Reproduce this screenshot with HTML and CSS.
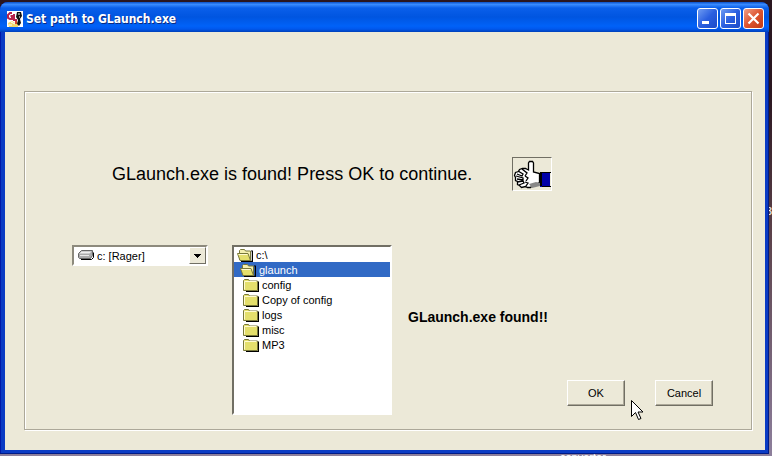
FILE: index.html
```
<!DOCTYPE html>
<html lang="en">
<head>
    <meta charset="UTF-8">
    <meta name="viewport" content="width=device-width, initial-scale=1.0">
    <title>Set path to GLaunch.exe</title>
    <link rel="stylesheet" href="styles.css">
</head>
<body>
    <!-- icons used more than once -->
    <svg class="sprites" aria-hidden="true">
        <symbol id="folder" viewBox="0 0 16 14">
            <path d="M3 13.5h12.5v-10" fill="none" stroke="#000" stroke-width="1.4"/>
            <path d="M.5 12.5v-10l1-1h4l1 1.500h8v9.500z" fill="#e4df6c" stroke="#77773a"/>
            <path d="M1.500 11.500v-8h12" fill="none" stroke="#fffbd0"/>
        </symbol>
        <symbol id="folder-open" viewBox="0 0 16 14">
            <path d="M4 13.500h11.500v-10l-1-1" fill="none" stroke="#000" stroke-width="1.400"/>
            <path d="M2.500 12v-9.500l1-1h4l1 1.500h5v9.500" fill="#f4f0b0" stroke="#77773a"/>
            <path d="M.5 5.500h10.500l2.500 7h-10.500z" fill="#e4df6c" stroke="#77773a"/>
            <path d="M1.500 6.500h9" fill="none" stroke="#fffbd0"/>
        </symbol>
    </svg>

    <span class="desktop-label label-bottom">converter</span>
    <span class="desktop-label label-right">3</span>

    <main class="window">
        <header class="title-bar">
            <svg class="app-icon" viewBox="0 0 16 16" aria-hidden="true">
                <rect width="16" height="16" fill="#fff"/>
                <path d="M1 12l4-2 3 2 3-1v5H2z" fill="#f3d86a"/>
                <path d="M5 2H3L1 4v3l2 1h2V5H3.500M7 3v6h3" fill="none" stroke="#b5224d" stroke-width="2"/>
                <path d="M10 1h4l1 4-2 3 1 4-2 3-2-2 1-4-2-3z" fill="#111"/>
                <path d="M11 3h2M12 6h1M4 11l4 2M2 14h3" stroke="#fff"/>
                <path d="M8 10h2v3H8z" fill="#d64528"/>
            </svg>
            <h1>Set path to GLaunch.exe</h1>
            <div class="window-buttons">
                <button type="button" aria-label="Minimize">
                    <svg viewBox="0 0 19 19"><path d="M4 12h7v3H4z" fill="#fff"/></svg>
                </button>
                <button type="button" aria-label="Maximize">
                    <svg viewBox="0 0 19 19"><path d="M4 4h11v11H4zM5 7v7h9V7z" fill="#fff" fill-rule="evenodd"/></svg>
                </button>
                <button type="button" class="close" aria-label="Close">
                    <svg viewBox="0 0 19 19"><path d="M4.500 4.500l10 10M14.500 4.500l-10 10" stroke="#fff" stroke-width="2.200"/></svg>
                </button>
            </div>
        </header>

        <form class="client">
            <fieldset class="group">
                <div class="message">
                    <p>GLaunch.exe is found! Press OK to continue.</p>
                    <div class="picture">
                        <svg viewBox="0 0 38 32" aria-hidden="true">
                            <path d="M15.500 12V5l1-1.500h3l1 1.500v9l6 1.500v9l-4 2-3 1-2 2h-3l-2-1-4 1-2-2-2-1v-3l-2-1v-3l-1-2 1-3 3-1 1-2 3-1h3l2 1z" fill="#fff" stroke="#000" stroke-width="1.300"/>
                            <path d="M5 13l5 3-1 2-5-2M3 18l7 2v2l-6-1M4 24l6-1 1 2-5 2M9 11l5 4-2 3M12 18l3 2-2 3M12 24l3 1-2 3" fill="none" stroke="#000" stroke-width="1.300"/>
                            <path d="M16 26l7-2 4 1v3l-8 2z" fill="#888"/>
                            <path d="M27 15h10v14H27z" fill="#0000a8"/>
                            <path d="M27 14h2v14h-2zM29 28h9v1h-9zM29 14h9v1h-9z" fill="#000"/>
                        </svg>
                    </div>
                </div>

                <div class="picker">
                    <div class="drive">
                        <select aria-label="Drive">
                            <option>c: [Rager]</option>
                        </select>
                        <svg class="drive-icon" viewBox="0 0 16 10" aria-hidden="true">
                            <path d="M3 9.500h10.500l2-2v-5" fill="none" stroke="#000"/>
                            <path d="M.5 3.500l3-3h11v5l-2 3H1.500l-1-1z" fill="#aaa" stroke="#666"/>
                            <path d="M1.500 3.500l2-2h10l-2 2z" fill="#eee"/>
                            <path d="M2 5.500h9" stroke="#e8e8e8"/>
                        </svg>
                        <svg class="drive-arrow" viewBox="0 0 15 15" aria-hidden="true">
                            <path d="M4 6h7v1h-1v1H9v1H8v1H7V9H6V8H5V7H4z" fill="#000"/>
                        </svg>
                    </div>

                    <ul class="folders" role="listbox" aria-label="Folders" tabindex="0">
                        <li class="root" role="option"><svg><use href="#folder-open"/></svg>c:\</li>
                        <li class="open selected" role="option" aria-selected="true"><svg><use href="#folder-open"/></svg>glaunch</li>
                        <li role="option"><svg><use href="#folder"/></svg>config</li>
                        <li role="option"><svg><use href="#folder"/></svg>Copy of config</li>
                        <li role="option"><svg><use href="#folder"/></svg>logs</li>
                        <li role="option"><svg><use href="#folder"/></svg>misc</li>
                        <li role="option"><svg><use href="#folder"/></svg>MP3</li>
                    </ul>

                    <div class="result">
                        <p>GLaunch.exe found!!</p>
                        <div class="actions">
                            <button type="button">OK</button>
                            <button type="button">Cancel</button>
                        </div>
                    </div>
                </div>
            </fieldset>
        </form>
    </main>

    <svg class="cursor" viewBox="0 0 12 21" aria-hidden="true">
        <path d="M.5.5v16l4-4 3 7 2.500-1-3-6.500h5z" fill="#fff" stroke="#000"/>
    </svg>
</body>
</html>
```

FILE: styles.css
```
* {
    box-sizing: border-box;
}

body {
    position: relative;
    margin: 0;
    min-height: 100vh;
    display: flex;
    padding: 2px 3px 2px 0;
    overflow: hidden;
    background: linear-gradient(#2a1620 20%, #5a4048 50%, #8d7f9c);
    font-family: "Liberation Sans", Arial, sans-serif;
    font-size: 11px;
    color: #000;
}

p,
h1,
ul {
    margin: 0;
    padding: 0;
}

.sprites {
    position: absolute;
    width: 0;
    height: 0;
}

/* desktop icon captions sticking out from under the window */
.desktop-label {
    position: absolute;
    line-height: 12px;
    color: #fff;
}

.label-bottom {
    bottom: -7px;
    left: 560px;
}

.label-right {
    top: 205px;
    right: 0;
}

.window {
    position: relative;
    flex: 1;
    display: flex;
    flex-direction: column;
    padding: 0 4px 4px 5px;
    border-radius: 8px 8px 0 0;
    background: #0a3bc4;
    box-shadow: inset -1px -1px #001a86, inset 1px 0 #0019a8;
}

/* title bar */
.title-bar {
    display: flex;
    align-items: center;
    height: 30px;
    margin: 0 -4px 0 -5px;
    padding: 3px 5px 0 7px;
    border-radius: 8px 8px 0 0;
    background: linear-gradient(#0a50c8, #3a8cff 8%, #0a5fea 20%, #0055e0 50%, #0062f8 80%, #0058ee 90%, #0040b8);
}

.app-icon {
    width: 16px;
    height: 16px;
}

.title-bar h1 {
    margin-left: 3px;
    font: bold 12px/16px "DejaVu Sans Condensed", "Open Sans", sans-serif;
    color: #fff;
    text-shadow: 1px 1px #0a2a80;
}

.window-buttons {
    display: flex;
    gap: 2px;
    margin-left: auto;
}

.window-buttons button {
    width: 21px;
    height: 21px;
    padding: 0;
    border: 1px solid #fff;
    border-radius: 3px;
    background: linear-gradient(135deg, #6f9cf2, #2a5fe0 50%, #1c4bc8);
}

.window-buttons .close {
    background: linear-gradient(135deg, #f0a088, #dd5430 50%, #c03a14);
}

.window-buttons svg {
    display: block;
    width: 19px;
    height: 19px;
}

/* dialog body */
.client {
    flex: 1;
    display: flex;
    padding: 59px 13px 20px 19px;
    background: #ece9d8;
}

.group {
    flex: 1;
    min-width: 0;
    margin: 0;
    padding: 65px 38px 13px 47px;
    border: 1px solid #aca899;
    box-shadow: inset 1px 1px #fff, 1px 1px #fff;
}

.message {
    display: flex;
    align-items: center;
    gap: 40px;
    padding-left: 40px;
}

.message p {
    font-size: 18px;
    line-height: 20px;
}

.picture {
    width: 40px;
    height: 34px;
    border: 1px solid;
    border-color: #716f64 #fff #fff #716f64;
}

.picture svg {
    display: block;
    width: 38px;
    height: 32px;
}

.picker {
    display: grid;
    grid-template-columns: 136px 160px 1fr;
    column-gap: 24px;
    margin-top: 54px;
}

.drive {
    position: relative;
}

.drive select {
    appearance: none;
    width: 100%;
    height: 21px;
    padding: 0 20px 0 23px;
    border: 2px solid;
    border-color: #8d8a7d #fff #fff #8d8a7d;
    border-radius: 0;
    background: #fff;
    font: inherit;
    color: #000;
}

.drive-icon {
    position: absolute;
    top: 5px;
    left: 6px;
    width: 16px;
    height: 10px;
}

.drive-arrow {
    position: absolute;
    top: 2px;
    right: 2px;
    width: 17px;
    height: 17px;
    border: 1px solid;
    border-color: #fff #716f64 #716f64 #fff;
    background: #ece9d8;
    pointer-events: none;
}

.folders {
    height: 170px;
    border: 2px solid;
    border-color: #716f64 #fff #fff #716f64;
    background: #fff;
    list-style: none;
}

.folders li {
    display: flex;
    align-items: center;
    gap: 3px;
    height: 15px;
    padding-left: 9px;
}

.folders .root {
    padding-left: 3px;
}

.folders .open {
    padding-left: 6px;
}

.folders .selected {
    background: #316ac5;
    color: #fff;
}

.folders svg {
    width: 16px;
    height: 14px;
}

.result {
    display: flex;
    flex-direction: column;
    justify-content: space-between;
    margin-left: -8px;
    padding: 64px 0 9px;
}

.result p {
    font-size: 14px;
    line-height: 16px;
    font-weight: bold;
}

.actions {
    display: flex;
    justify-content: flex-end;
    gap: 30px;
}

.actions button {
    width: 58px;
    height: 26px;
    padding: 0;
    border: 1px solid;
    border-color: #fff #716f64 #716f64 #fff;
    box-shadow: inset -1px -1px #aca899;
    background: #ece9d8;
    font: inherit;
    color: #000;
}

.cursor {
    position: absolute;
    top: 400px;
    left: 631px;
    width: 12px;
    height: 21px;
}
```
